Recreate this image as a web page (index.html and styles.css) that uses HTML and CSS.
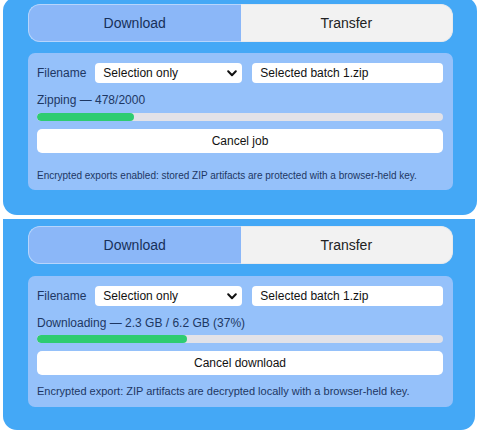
FILE: index.html
```html
<!DOCTYPE html>
<html lang="en">
<head>
<meta charset="utf-8">
<title>Export panels</title>
<link rel="stylesheet" href="styles.css">
</head>
<body>
  <section class="panel panel-first">
    <div class="tabs">
      <div class="tab tab-active">Download</div>
      <div class="tab tab-idle">Transfer</div>
    </div>
    <div class="card card-first">
      <div class="row">
        <span class="label">Filename</span>
        <div class="select">
          <span>Selection only</span>
          <svg class="chev" width="10" height="7" viewBox="0 0 10 7"><path d="M1.2 1.3 L5 5.2 L8.8 1.3" fill="none" stroke="#111" stroke-width="2" stroke-linecap="round" stroke-linejoin="round"/></svg>
        </div>
        <div class="input">Selected batch 1.zip</div>
      </div>
      <div class="status">Zipping — 478/2000</div>
      <div class="track"><div class="fill" style="width:23.9%"></div></div>
      <div class="btn">Cancel job</div>
      <p class="note note-first">Encrypted exports enabled: stored ZIP artifacts are protected with a browser-held key.</p>
    </div>
  </section>
  <section class="panel panel-second">
    <div class="tabs">
      <div class="tab tab-active">Download</div>
      <div class="tab tab-idle">Transfer</div>
    </div>
    <div class="card card-second">
      <div class="row">
        <span class="label">Filename</span>
        <div class="select">
          <span>Selection only</span>
          <svg class="chev" width="10" height="7" viewBox="0 0 10 7"><path d="M1.2 1.3 L5 5.2 L8.8 1.3" fill="none" stroke="#111" stroke-width="2" stroke-linecap="round" stroke-linejoin="round"/></svg>
        </div>
        <div class="input">Selected batch 1.zip</div>
      </div>
      <div class="status">Downloading — 2.3 GB / 6.2 GB (37%)</div>
      <div class="track"><div class="fill" style="width:37%"></div></div>
      <div class="btn">Cancel download</div>
      <p class="note note-second">Encrypted export: ZIP artifacts are decrypted locally with a browser-held key.</p>
    </div>
  </section>
</body>
</html>
```
FILE: styles.css
```css
html, body {
  margin: 0;
  padding: 0;
  background: #ffffff;
}
body {
  font-family: "Liberation Sans", Arial, sans-serif;
  color: #1d3763;
  width: 482px;
  height: 434px;
  overflow: hidden;
}
.panel {
  background: #44a8f6;
  box-sizing: border-box;
  padding: 7px 24px 0 25px;
}
.panel-first {
  margin: -3px 5px 0 3px;
  border-radius: 14px;
  padding-bottom: 25px;
}
.panel-second {
  margin: 4px 7px 0 3px;
  border-radius: 0 0 14px 14px;
  padding-right: 22px;
  padding-bottom: 23px;
}
.tabs {
  display: flex;
  height: 38px;
}
.tab {
  flex: 1;
  display: flex;
  align-items: center;
  justify-content: center;
  font-size: 14px;
  box-sizing: border-box;
}
.tab-active {
  background: #8bb7f8;
  border: 1px solid #b7d5fc;
  border-right: none;
  border-radius: 12px 0 0 12px;
  color: #17305a;
}
.tab-idle {
  background: #f2f2f2;
  border: 1px solid #e9eaec;
  border-left: none;
  border-radius: 0 12px 12px 0;
  color: #222222;
}
.card {
  background: #95c1fa;
  border-radius: 7px;
  padding: 10px 10px 10px 9px;
}
.card-first {
  margin-top: 11px;
  padding-bottom: 8px;
}
.card-second {
  margin-top: 12px;
  padding-bottom: 9px;
}
.row {
  display: flex;
  align-items: center;
  height: 20px;
}
.label {
  font-size: 12px;
  margin-right: 9px;
  color: #1d3763;
}
.select {
  width: 147px;
  height: 20px;
  box-sizing: border-box;
  background: #ffffff;
  border-radius: 4px;
  display: flex;
  align-items: center;
  justify-content: space-between;
  padding: 0 5px 0 8px;
  font-size: 12px;
  color: #111111;
}
.chev {
  display: block;
}
.input {
  flex: 1;
  margin-left: 10px;
  height: 20px;
  box-sizing: border-box;
  background: #ffffff;
  border-radius: 4px;
  display: flex;
  align-items: center;
  padding-left: 8px;
  font-size: 12px;
  color: #111111;
}
.status {
  font-size: 12px;
  line-height: 14px;
  margin-top: 10px;
  color: #1d3763;
}
.track {
  margin-top: 5px;
  height: 8px;
  background: #e2e2e8;
  border-radius: 4px;
  overflow: hidden;
}
.card-first .track {
  margin-top: 6px;
}
.fill {
  height: 100%;
  background: #2ecc71;
  border-radius: 4px;
}
.btn {
  margin-top: 8px;
  height: 24px;
  background: #ffffff;
  border-radius: 5px;
  display: flex;
  align-items: center;
  justify-content: center;
  font-size: 12px;
  color: #111111;
}
.note {
  margin: 0;
  color: #1d3763;
}
.note-first {
  font-size: 10px;
  line-height: 12px;
  margin-top: 17px;
}
.note-second {
  font-size: 11px;
  line-height: 13px;
  margin-top: 10px;
}
```
